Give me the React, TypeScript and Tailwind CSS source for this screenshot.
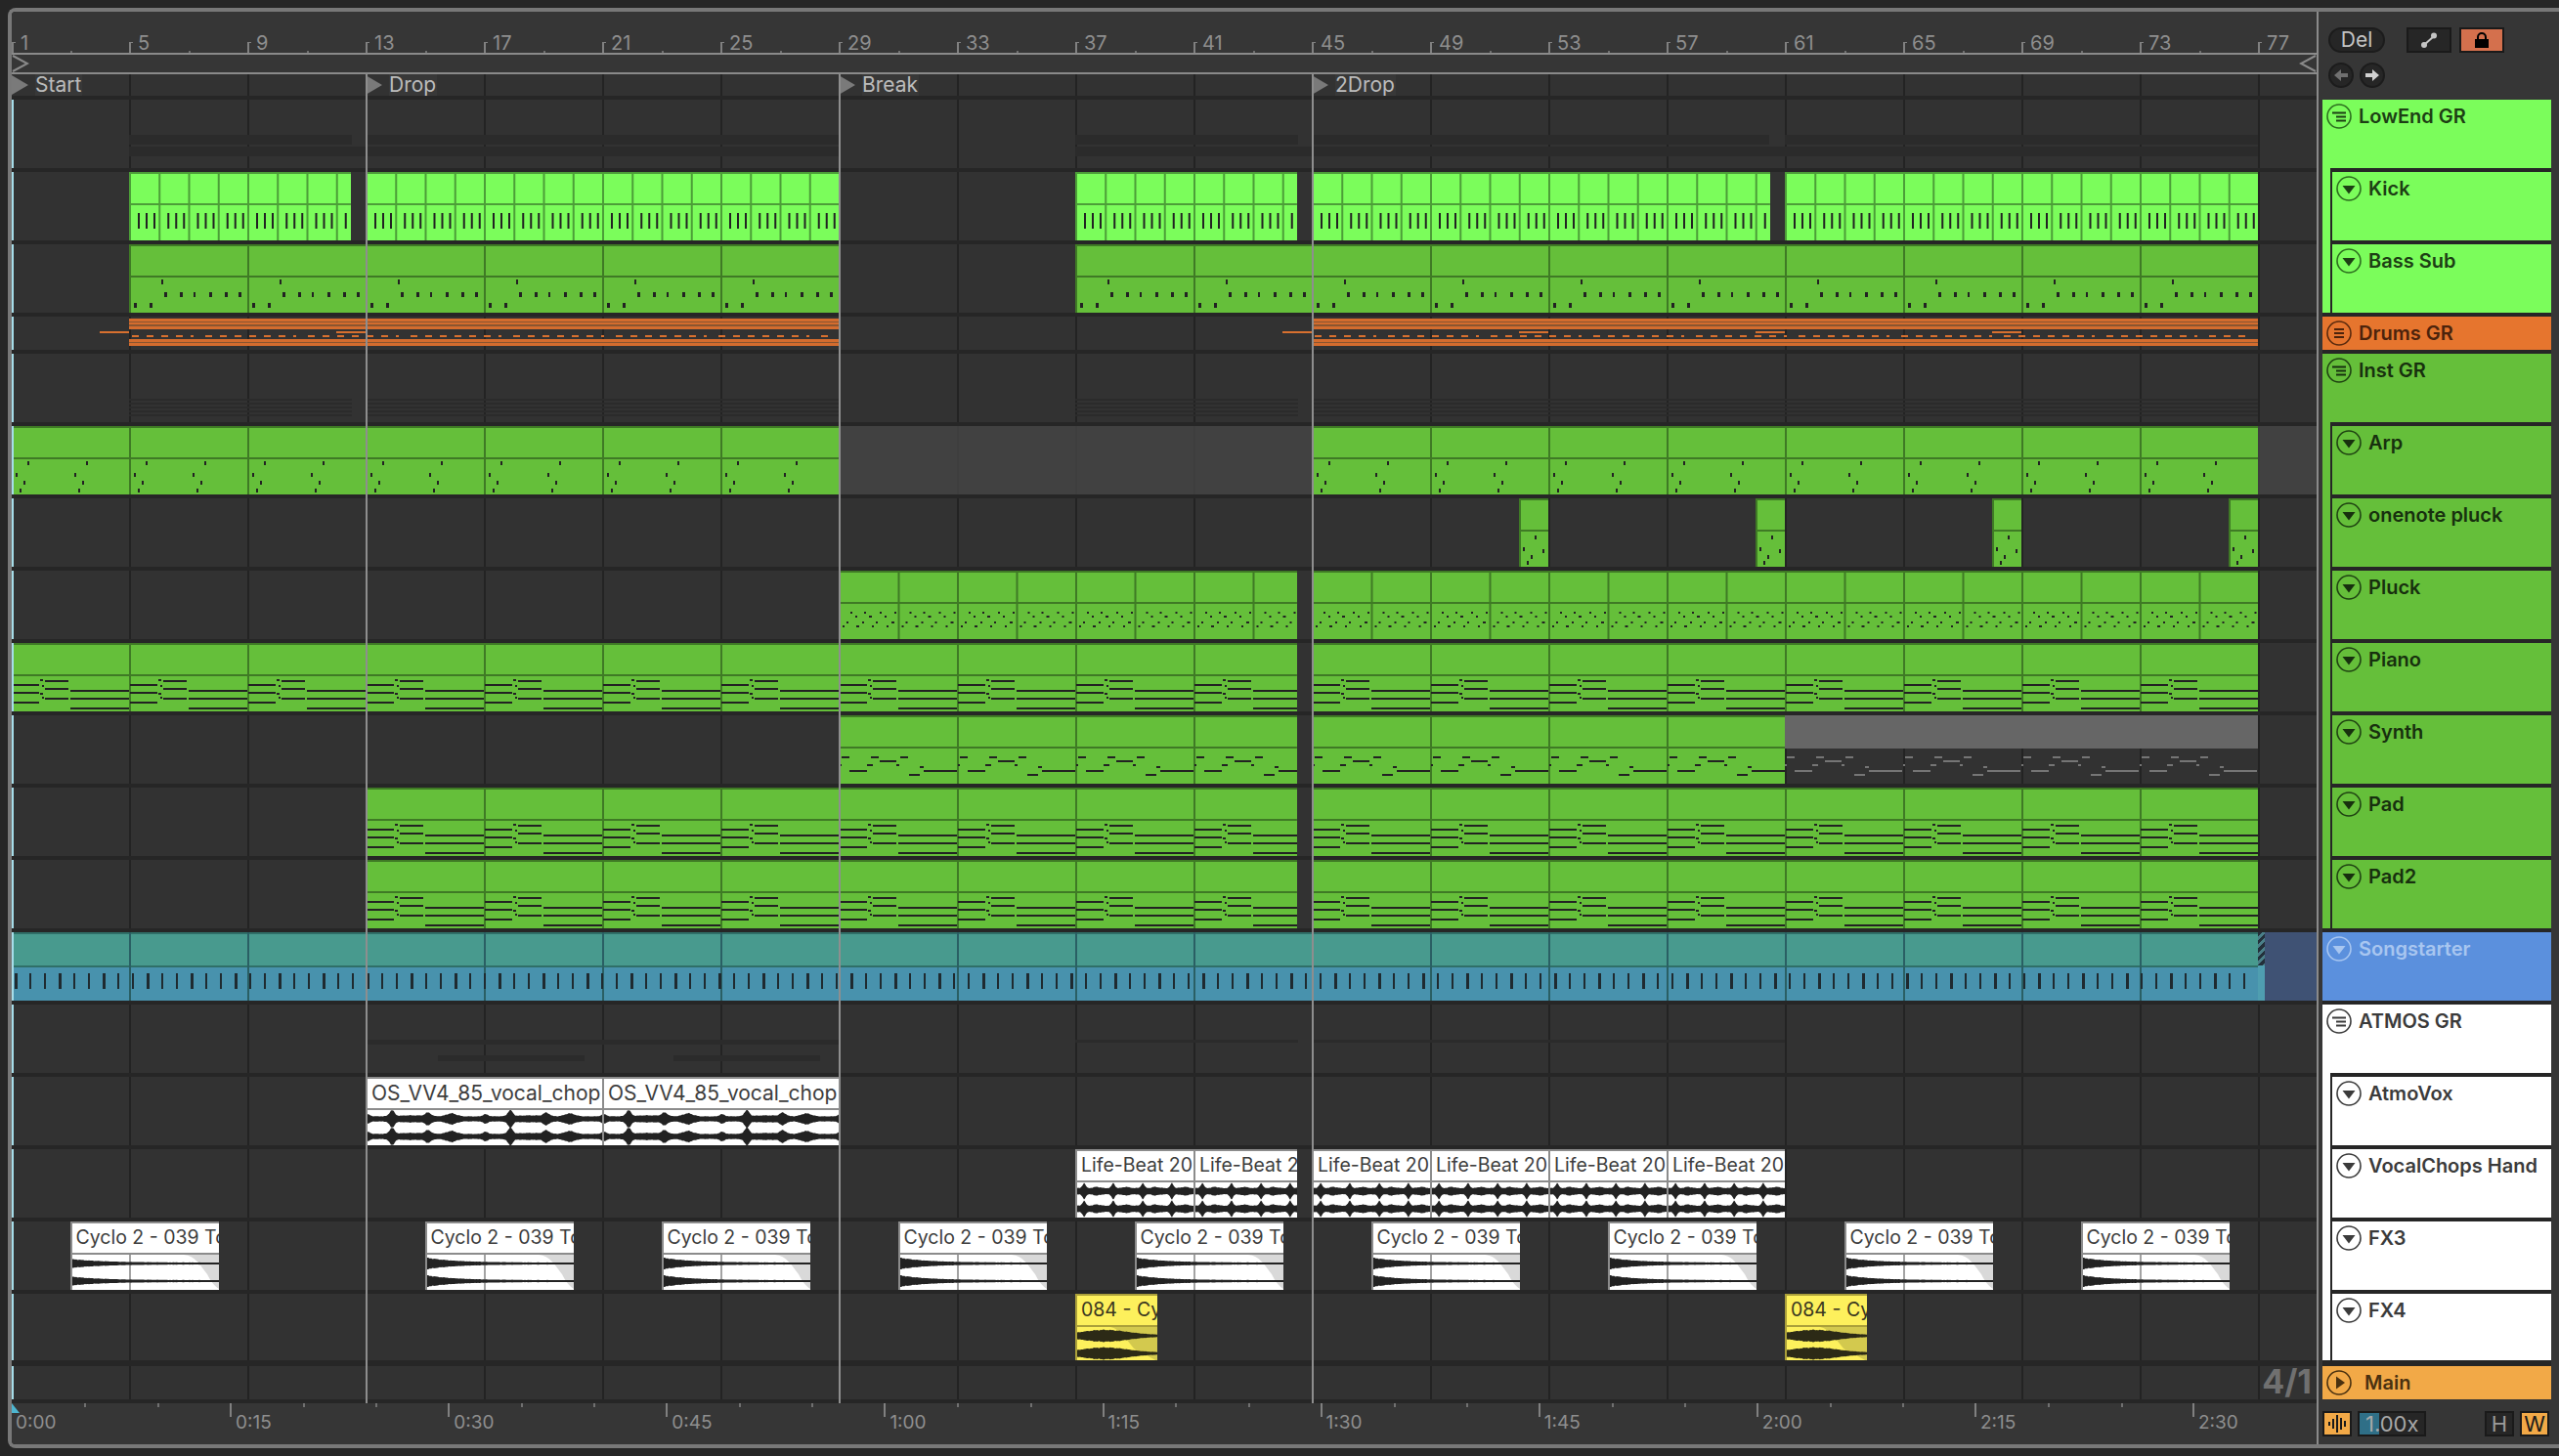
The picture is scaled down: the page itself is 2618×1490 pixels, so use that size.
import React from 'react';

const BAR = 30.25;
const barX = (bar: number) => (bar <= 1 ? 0 : (bar - 1) * BAR - 1);
const gridBars = Array.from({ length: 19 }, (_, i) => 5 + i * 4);

type Note = [number, number, number, number];

const bassNotes: Note[] = [
  [32, 36, 2, 5], [35, 49, 3, 5], [51, 49, 3, 5], [65, 49, 2, 5], [81, 49, 3, 5], [97, 49, 3, 5], [111, 49, 3, 5], [4, 60, 3, 5], [20, 60, 3, 5],
];
const arpNotes: Note[] = [
  [16, 36, 2, 4], [76, 36, 2, 4], [4, 48, 2, 4], [64, 48, 2, 4], [12, 56, 2, 4], [72, 56, 2, 4], [8, 64, 2, 4], [68, 64, 2, 4],
];
const padNotes: Note[] = [
  [34, 38, 24, 2], [0, 42, 28, 2], [34, 46, 24, 2], [60, 48, 60, 2], [0, 50, 28, 2], [34, 56, 24, 2], [60, 56, 60, 2], [0, 60, 28, 2], [60, 66, 60, 2],
  [29, 37, 3, 2], [31, 43, 2, 2], [29, 51, 3, 2], [31, 55, 2, 2],
];
const synthNotes: Note[] = [
  [2, 42, 8, 2], [32, 42, 8, 2], [62, 42, 8, 2], [41, 46, 17, 2], [0, 50, 2, 2], [28, 50, 6, 2], [58, 50, 3, 2], [82, 52, 4, 2], [10, 56, 18, 2], [86, 56, 34, 2], [71, 60, 11, 2],
];
const pluckDots: Note[] = [
  [11, 42, 2, 2], [25, 42, 2, 2], [41, 42, 2, 2], [56, 42, 2, 2], [16, 46, 2, 2], [30, 46, 3, 2], [46, 46, 2, 2],
  [7, 52, 2, 2], [23, 52, 2, 2], [37, 52, 2, 2], [53, 52, 3, 2], [3, 56, 2, 2], [17, 56, 3, 2], [33, 56, 2, 2], [48, 56, 2, 2],
];
const kickNotes: Note[] = [[8, 42, 2, 16], [16, 42, 2, 16], [24, 42, 2, 16]];

const themes = {
  light: { bg: 'bg-[#7bfd5b]', border: 'border-[#4c9e38]', line: '#4c9e38', note: '#222222' },
  green: { bg: 'bg-[#65bf3a]', border: 'border-[#3f7a25]', line: '#3f7a25', note: '#222222' },
};

function MidiClip({ from, to, theme, every, notes, period }: { from: number; to: number; theme: 'light' | 'green'; every: number; notes: Note[]; period: number }) {
  const t = themes[theme];
  const left = barX(from);
  const width = barX(to) - left;
  const reps = Math.ceil(2400 / period);
  const lines: number[] = [];
  for (let b = from + every; barX(b) < left + width - 1; b += every) lines.push(barX(b) - left);
  const rects: Note[] = [];
  for (let k = 0; k < reps; k++) {
    for (const n of notes) {
      const x = k * period + n[0] - left;
      if (x + n[2] > 0 && x < width) rects.push([x, n[1], n[2], n[3]]);
    }
  }
  return (
    <div className={`absolute inset-y-0 ${t.bg} border-l-2 border-t-2 ${t.border}`} style={{ left, width }}>
      <svg className="absolute left-[-2px] top-[-2px]" width={width} height={70}>
        <rect x={0} y={32} width={width} height={2} fill={t.line} />
        {lines.map(x => <rect key={x} x={x} y={0} width={2} height={70} fill={t.line} />)}
        {rects.map((r, i) => <rect key={i} x={r[0]} y={r[1]} width={r[2]} height={r[3]} fill={t.note} />)}
      </svg>
    </div>
  );
}

const noise = (x: number) => Math.sin(x * 1.9) * 0.5 + Math.sin(x * 0.73 + 1) * 0.5 + Math.sin(x * 3.7) * 0.3;

function wavePath(w: number, cy: number, amp: (x: number) => number) {
  const top: string[] = [];
  const bottom: string[] = [];
  for (let x = 0; x <= w; x += 1) {
    const base = amp(x);
    const a = base * (1 + 0.09 * noise(x));
    top.push(`${x},${(cy - a).toFixed(1)}`);
    bottom.unshift(`${x},${(cy + a).toFixed(1)}`);
  }
  return `M${top.join(' L')} L${bottom.join(' L')} Z`;
}

const bump = (x: number, c: number, width: number) => Math.exp(-((x - c) * (x - c)) / (2 * width * width));

const vocalAmp = (x: number) => {
  const p = x % 121;
  return 2.6 + 6 * bump(p, 25, 2.5) + 3.5 * bump(p, 62, 3) + 3 * bump(p, 86, 5) + 2.5 * bump(p, 121, 2.5) + 2 * bump(p, 0, 2.5) + 1 * bump(p, 45, 12);
};
const beatAmp = (x: number) => {
  const p = x % 30;
  return 3.2 + 5 * bump(p, 7, 1.6) + 1.2 * bump(p, 20, 3);
};
const cycloAmp = (x: number) => 1 + 4.8 * Math.exp(-x / 30);
const cycloSoftAmp = (x: number) => 1 + 3.4 * Math.exp(-x / 34);
const yellowAmp = (x: number) => 1 + 5 * Math.exp(-((x - 28) * (x - 28)) / 1100);

function AudioClip({ from, width, title, amp, fade, yellow, lines, wide }: { from: number; width: number; title: string; amp: (x: number) => number; fade?: string; yellow?: boolean; lines?: number[]; wide?: boolean }) {
  const shade = yellow ? '#2c2a16' : '#222222';
  return (
    <div
      className={`absolute inset-y-0 flex flex-col overflow-hidden border-l-2 border-t-2 ${yellow ? 'border-[#aba03a] bg-[#fdf05c] text-[#3a3720]' : 'border-[#8c8c8c] bg-white text-[#3d3d3d]'}`}
      style={{ left: from, width }}
    >
      <div className={`h-[32px] shrink-0 overflow-hidden whitespace-nowrap border-b-2 pl-[4px] leading-[29px] ${wide ? 'text-[21px]' : 'text-[19.5px]'} ${yellow ? 'border-[#aba03a]' : 'border-[#8c8c8c]'}`}>{title}</div>
      <svg className="shrink-0" width={width} height={36}>
        {fade && <path d={fade} fill={yellow ? '#d3c94e' : '#d9d9d9'} />}
        {lines?.map(x => <rect key={x} x={x} y={0} width={2} height={36} fill="#a3a3a3" />)}
        <path d={wavePath(width, 9, amp)} fill={shade} />
        <path d={wavePath(width, 27, amp)} fill={shade} />
      </svg>
    </div>
  );
}

function Grid() {
  return (
    <>
      {gridBars.map(b => (
        <div key={b} className="absolute inset-y-0 w-[2px] bg-[#232323]" style={{ left: barX(b) }} />
      ))}
    </>
  );
}

function Lane({ h, className, children }: { h: string; className?: string; children?: React.ReactNode }) {
  return (
    <div className={`relative shrink-0 overflow-hidden bg-[#323232] ${h} ${className ?? ''}`}>
      <Grid />
      {children}
      <div className="absolute inset-y-0 left-0 w-[2px] bg-[#a6dde9]" />
    </div>
  );
}

function Faint({ from, to, y, h }: { from: number; to: number; y: number; h: number }) {
  return <div className="absolute bg-[#2b2b2b]" style={{ left: from, width: to - from, top: y, height: h }} />;
}

const drumStripes: Array<[number, number]> = [[2, 3], [6, 2], [10, 3], [23, 3], [27, 3]];

function DrumClip({ from, to }: { from: number; to: number }) {
  const w = to - from;
  const dashes = Array.from({ length: Math.floor(w / 15) }, (_, i) => i * 15 + 3);
  return (
    <div className="absolute inset-y-0" style={{ left: from, width: w }}>
      <svg width={w} height={34}>
        <rect x={0} y={2} width={w} height={11} fill="#8a5530" />
        <rect x={0} y={23} width={w} height={7} fill="#8a5530" />
        {drumStripes.map(([y, h]) => <rect key={y} x={0} y={y} width={w} height={h} fill="#d46c2e" />)}
        {dashes.map(x => <rect key={x} x={x} y={19} width={x % 7 === 0 ? 3 : 7} height={2} fill="#d8702f" />)}
      </svg>
    </div>
  );
}

function Arrangement() {
  const cycloBars = [3, 15, 23, 31, 39, 47, 55, 63, 71];
  const fade = 'M114,0 C126,1 130,10 138,20 C142,28 146,33 152,36 L152,0 Z';
  return (
    <div className="flex w-[2360px] shrink-0 flex-col border-r-2 border-[#8a8a8a] bg-[#262626]">
      <Ruler />
      <div className="relative h-[22px] shrink-0 border-y-2 border-[#8a8a8a] bg-[#363636]">
        <svg className="absolute left-0 top-0" width={18} height={18}><path d="M1,1 L16,9 L1,17" fill="none" stroke="#8a8a8a" strokeWidth={2} /></svg>
        <svg className="absolute right-0 top-0" width={18} height={18}><path d="M17,1 L2,9 L17,17" fill="none" stroke="#8a8a8a" strokeWidth={2} /></svg>
      </div>
      <div className="relative mb-[4px] h-[22px] shrink-0 bg-[#323232]">
        <Grid />
        {[{ b: 1, t: 'Start' }, { b: 13, t: 'Drop' }, { b: 29, t: 'Break' }, { b: 45, t: '2Drop' }].map(l => (
          <div key={l.t} className="absolute inset-y-0 flex items-center" style={{ left: barX(l.b) }}>
            <svg width={24} height={22}><path d="M0,1 L17,11 L0,21 Z" fill="#7a7a7a" /></svg>
            <span className="bg-[#383838] pr-[1px] text-[21px] leading-[22px] text-[#bcbcbc]">{l.t}</span>
          </div>
        ))}
      </div>

      <div className="flex flex-col gap-1">
        <Lane h="h-[70px]">
          <Faint from={barX(5)} to={348} y={36} h={10} />
          <Faint from={barX(13)} to={barX(29)} y={36} h={10} />
          <Faint from={barX(37)} to={1316} y={36} h={10} />
          <Faint from={barX(45)} to={1798} y={36} h={10} />
          <Faint from={barX(61)} to={barX(77)} y={36} h={10} />
          <Faint from={barX(5)} to={barX(29)} y={48} h={10} />
          <Faint from={barX(37)} to={barX(77)} y={48} h={10} />
        </Lane>
        <Lane h="h-[70px]">
          <MidiClip from={5} to={12.5} theme="light" every={1} notes={kickNotes} period={BAR} />
          <MidiClip from={13} to={29} theme="light" every={1} notes={kickNotes} period={BAR} />
          <MidiClip from={37} to={44.5} theme="light" every={1} notes={kickNotes} period={BAR} />
          <MidiClip from={45} to={60.5} theme="light" every={1} notes={kickNotes} period={BAR} />
          <MidiClip from={61} to={77} theme="light" every={1} notes={kickNotes} period={BAR} />
        </Lane>
        <Lane h="h-[70px]">
          <MidiClip from={5} to={29} theme="green" every={4} notes={bassNotes} period={121} />
          <MidiClip from={37} to={77} theme="green" every={4} notes={bassNotes} period={121} />
        </Lane>
        <Lane h="h-[34px]">
          <DrumClip from={barX(5)} to={barX(29)} />
          <DrumClip from={barX(45)} to={barX(77)} />
          {[[90, 120], [332, 362], [1300, 1330], [1542, 1572], [1784, 1814], [2026, 2056]].map(([a, b]) => (
            <div key={a} className="absolute top-[15px] h-[2px] bg-[#d8702f]" style={{ left: a, width: b - a }} />
          ))}
        </Lane>
        <Lane h="h-[70px]">
          {[46, 50, 54, 58, 62].map(y => (
            <React.Fragment key={y}>
              <Faint from={barX(5)} to={348} y={y} h={2} />
              <Faint from={barX(13)} to={barX(29)} y={y} h={2} />
              <Faint from={barX(37)} to={1316} y={y} h={2} />
              <Faint from={barX(45)} to={barX(77)} y={y} h={2} />
            </React.Fragment>
          ))}
        </Lane>
        <Lane h="h-[70px]">
          <div className="absolute inset-y-0 bg-[#454545]/80" style={{ left: barX(29), width: barX(45) - barX(29) }} />
          <div className="absolute inset-y-0 right-0 bg-[#454545]/80" style={{ left: barX(77) }} />
          <MidiClip from={1} to={29} theme="green" every={4} notes={arpNotes} period={121} />
          <MidiClip from={45} to={77} theme="green" every={4} notes={arpNotes} period={121} />
        </Lane>
        <Lane h="h-[70px]">
          {[52, 60, 68, 76].map(b => (
            <MidiClip key={b} from={b} to={b + 1} theme="green" every={4} notes={[[16, 38, 2, 4], [4, 50, 2, 4], [12, 58, 2, 4], [8, 64, 2, 4], [24, 52, 2, 4]].map(n => [n[0] + barX(b), n[1], n[2], n[3]] as Note)} period={2400} />
          ))}
        </Lane>
        <Lane h="h-[70px]">
          <MidiClip from={29} to={44.5} theme="green" every={2} notes={pluckDots} period={60.5} />
          <MidiClip from={45} to={77} theme="green" every={2} notes={pluckDots} period={60.5} />
        </Lane>
        <Lane h="h-[70px]">
          <MidiClip from={1} to={44.5} theme="green" every={4} notes={padNotes} period={121} />
          <MidiClip from={45} to={77} theme="green" every={4} notes={padNotes} period={121} />
        </Lane>
        <Lane h="h-[70px]">
          <MidiClip from={29} to={44.5} theme="green" every={4} notes={synthNotes} period={121} />
          <MidiClip from={45} to={61} theme="green" every={4} notes={synthNotes} period={121} />
          <div className="absolute inset-y-0 flex flex-col" style={{ left: barX(61), width: barX(77) - barX(61) }}>
            <div className="h-[34px] bg-[#666666]" />
            <svg width={barX(77) - barX(61)} height={36} className="shrink-0">
              {Array.from({ length: 4 }).flatMap((_, k) => synthNotes.map((n, i) => (
                <rect key={`${k}-${i}`} x={k * 121 + n[0]} y={n[1] - 34} width={n[2]} height={n[3]} fill="#757575" />
              )))}
            </svg>
          </div>
        </Lane>
        <Lane h="h-[70px]">
          <MidiClip from={13} to={44.5} theme="green" every={4} notes={padNotes} period={121} />
          <MidiClip from={45} to={77} theme="green" every={4} notes={padNotes} period={121} />
        </Lane>
        <Lane h="h-[70px]">
          <MidiClip from={13} to={44.5} theme="green" every={4} notes={padNotes} period={121} />
          <MidiClip from={45} to={77} theme="green" every={4} notes={padNotes} period={121} />
        </Lane>
        <Lane h="h-[70px]">
          <div className="absolute inset-y-0 right-0 bg-[#3f5274]" style={{ left: barX(77) + 7 }} />
          <div className="absolute inset-y-0 left-0 flex flex-col" style={{ width: barX(77) }}>
            <div className="h-[34px] border-t-2 border-[#2f6f68] bg-[#489a8e]" />
            <div className="h-[36px] border-t-2 border-[#2f6f68] bg-[#4892ad]" />
          </div>
          <div className="absolute inset-y-0 flex w-[7px] flex-col" style={{ left: barX(77) }}>
            <div className="h-[34px] bg-[repeating-linear-gradient(135deg,#23303a_0px,#23303a_3px,#4a7f88_3px,#4a7f88_6px)]" />
            <div className="h-[36px] bg-[#4f9eb0]" />
          </div>
          <svg className="absolute left-0 top-0" width={barX(77)} height={70}>
            {gridBars.slice(0, -1).map(b => <rect key={b} x={barX(b)} y={0} width={2} height={70} fill="#2a5f64" />)}
            {Array.from({ length: 153 }, (_, i) => <rect key={i} x={i * 15 + 3} y={42} width={i % 3 === 0 ? 3 : 2} height={16} fill="#1f2a30" />)}
          </svg>
        </Lane>
        <Lane h="h-[70px]">
          <Faint from={barX(13)} to={barX(29)} y={36} h={5} />
          <Faint from={436} to={586} y={52} h={6} />
          <Faint from={677} to={827} y={52} h={6} />
          <Faint from={barX(37)} to={1316} y={36} h={3} />
          <Faint from={barX(45)} to={barX(61)} y={36} h={3} />
        </Lane>
        <Lane h="h-[70px]">
          <AudioClip from={barX(13)} width={242} title="OS_VV4_85_vocal_chop" amp={vocalAmp} wide />
          <AudioClip from={barX(21)} width={242} title="OS_VV4_85_vocal_chop" amp={vocalAmp} wide />
        </Lane>
        <Lane h="h-[70px]">
          <AudioClip from={barX(37)} width={121} title="Life-Beat 20" amp={beatAmp} />
          <AudioClip from={barX(41)} width={106} title="Life-Beat 20" amp={beatAmp} />
          {[45, 49, 53, 57].map(b => <AudioClip key={b} from={barX(b)} width={121} title="Life-Beat 20" amp={beatAmp} />)}
        </Lane>
        <Lane h="h-[70px]">
          {cycloBars.map((b, i) => (
            <AudioClip key={b} from={barX(b)} width={152} title="Cyclo 2 - 039 To" amp={i === 0 ? cycloSoftAmp : cycloAmp} fade={fade} lines={[58]} />
          ))}
        </Lane>
        <Lane h="h-[68px]">
          <AudioClip from={barX(37)} width={84} title="084 - Cy" amp={yellowAmp} yellow fade="M34,0 C44,2 50,12 58,22 L84,36 L84,0 Z" />
          <AudioClip from={barX(61)} width={84} title="084 - Cy" amp={yellowAmp} yellow fade="M34,0 C44,2 50,12 58,22 L84,36 L84,0 Z" />
        </Lane>
        <Lane h="mt-[2px] h-[34px]">
          <div className="absolute right-[5px] top-[-2px] text-[34px] font-bold leading-[36px] text-[#707070]">4/1</div>
        </Lane>
      </div>
      <TimeRuler />
    </div>
  );
}

function Ruler() {
  const ticks = Array.from({ length: 39 }, (_, i) => i * 2 + 1);
  return (
    <div className="relative h-[42px] shrink-0 bg-[#363636]">
      {ticks.map(b => (
        (b - 1) % 4 === 0 ? (
          <div key={b} className="absolute bottom-0 flex items-end" style={{ left: barX(b) }}>
            <div className="h-[11px] w-[2px] bg-[#808080]" />
            <div className="mb-[10px] h-[1px] w-[2px] bg-[#808080]" />
            <span className="mb-[-2px] ml-[5px] text-[20px] leading-[24px] text-[#8e8e8e]">{b}</span>
          </div>
        ) : (
          <div key={b} className="absolute bottom-0 h-[2px] w-[2px] bg-[#707070]" style={{ left: barX(b) }} />
        )
      ))}
    </div>
  );
}

function TimeRuler() {
  const labels = ['0:00', '0:15', '0:30', '0:45', '1:00', '1:15', '1:30', '1:45', '2:00', '2:15', '2:30'];
  return (
    <div className="relative mt-[4px] h-[42px] shrink-0 bg-[#363636]">
      <svg className="absolute left-0 top-0" width={8} height={10}><path d="M0,0 L8,10 L0,10 Z" fill="#4db6d0" /></svg>
      {Array.from({ length: 31 }, (_, i) => i).map(i => i % 3 !== 0 && (
        <div key={i} className="absolute top-0 h-[4px] w-[2px] bg-[#707070]" style={{ left: i * 74.4 }} />
      ))}
      {labels.map((l, i) => (
        <div key={l} className="absolute top-0 flex" style={{ left: i * 223.1 }}>
          {i > 0 && <div className="h-[14px] w-[2px] bg-[#808080]" />}
          <span className="ml-[4px] mt-[8px] text-[19px] leading-[24px] text-[#8e8e8e]">{l}</span>
        </div>
      ))}
    </div>
  );
}

function TrackIcon({ kind, stroke, fill }: { kind: 'group' | 'groupEven' | 'track' | 'play'; stroke: string; fill: string }) {
  return (
    <svg className="shrink-0" width={26} height={26} viewBox="0 0 26 26">
      <circle cx={13} cy={13} r={12} fill="none" stroke={stroke} strokeWidth={1.6} />
      {kind === 'track' && <path d="M6.5,10 L19.5,10 L13,18.5 Z" fill={fill} />}
      {kind === 'play' && <path d="M10,6.5 L19,13 L10,19.5 Z" fill={fill} />}
      {kind === 'group' && <path d="M6,8.5 H20 V10.5 H6 Z M10,12.5 H20 V14.5 H10 Z M10,16.5 H20 V18.5 H10 Z" fill={fill} />}
      {kind === 'groupEven' && <path d="M8,8 H18 V10 H8 Z M8,12 H18 V14 H8 Z M8,16 H18 V18 H8 Z" fill={fill} />}
    </svg>
  );
}

type Tone = { bg: string; text: string; stroke: string; fill: string };
const tones: Record<string, Tone> = {
  light: { bg: 'bg-[#7bfd5b]', text: 'text-[#1d3f14]', stroke: '#2c6e1e', fill: '#1d3f14' },
  orange: { bg: 'bg-[#e6752e]', text: 'text-[#4c230c]', stroke: '#5a2a0e', fill: '#4c230c' },
  green: { bg: 'bg-[#65bf3a]', text: 'text-[#17300e]', stroke: '#1f4312', fill: '#17300e' },
  blue: { bg: 'bg-[#5b90dd]', text: 'text-[#a8c6f0]', stroke: '#a8c6f0', fill: '#a8c6f0' },
  white: { bg: 'bg-white', text: 'text-[#3b3b3b]', stroke: '#3b3b3b', fill: '#3b3b3b' },
  main: { bg: 'bg-[#f2a947]', text: 'text-[#4a3110]', stroke: '#4a3110', fill: '#4a3110' },
};

function Header({ name, tone, kind, h, gap }: { name: string; tone: Tone; kind: 'group' | 'groupEven' | 'track' | 'play'; h: string; gap?: string }) {
  return (
    <div className={`flex items-start pl-[4px] pt-[4px] ${h} ${tone.text}`}>
      <TrackIcon kind={kind} stroke={tone.stroke} fill={tone.fill} />
      <span className={`${gap ?? 'ml-[7px]'} text-[20px] font-semibold leading-[26px]`}>{name}</span>
    </div>
  );
}

function Group({ name, tone, children, last }: { name: string; tone: Tone; children: string[]; last?: boolean }) {
  return (
    <div className={tone.bg}>
      <Header name={name} tone={tone} kind="group" h="h-[70px]" />
      <div className="pl-[8px]">
        {children.map((c, i) => (
          <div key={c} className="border-l-2 border-t-4 border-[#262626]">
            <Header name={c} tone={tone} kind="track" h={last && i === children.length - 1 ? 'h-[68px]' : 'h-[70px]'} />
          </div>
        ))}
      </div>
    </div>
  );
}

function SmallBox({ children, className }: { children: React.ReactNode; className: string }) {
  return <div className={`flex h-[26px] items-center justify-center border-2 border-[#1a1a1a] ${className}`}>{children}</div>;
}

function Panel() {
  return (
    <div className="flex w-[242px] shrink-0 flex-col pl-1 pr-1">
      <div className="h-[90px] shrink-0 pl-[6px] pt-[16px]">
        <div className="flex items-center">
          <div className="flex h-[26px] w-[58px] items-center justify-center rounded-full border-2 border-[#1c1c1c] bg-[#262626] text-[21px] text-[#c4c4c4]">Del</div>
          <SmallBox className="ml-[22px] w-[46px] bg-[#262626]">
            <svg width={18} height={18}><path d="M4,14 L14,5" stroke="#c4c4c4" strokeWidth={2} /><circle cx={4} cy={14} r={3} fill="#c4c4c4" /><circle cx={14} cy={4.5} r={3} fill="#c4c4c4" /></svg>
          </SmallBox>
          <SmallBox className="ml-[8px] w-[46px] bg-[#d4704d]">
            <svg width={18} height={18}><path d="M5,8 V6 A4,4 0 0 1 13,6 V8" fill="none" stroke="#000" strokeWidth={2} /><rect x={2} y={8} width={14} height={9} fill="#000" /></svg>
          </SmallBox>
        </div>
        <div className="mt-[10px] flex gap-[6px]">
          <div className="flex h-[26px] w-[26px] items-center justify-center rounded-full border-2 border-[#1c1c1c] bg-[#262626]">
            <svg width={16} height={14}><path d="M1,7 L8,1 V5 H15 V9 H8 V13 Z" fill="#707070" /></svg>
          </div>
          <div className="flex h-[26px] w-[26px] items-center justify-center rounded-full border-2 border-[#1c1c1c] bg-[#262626]">
            <svg width={16} height={14}><path d="M15,7 L8,1 V5 H1 V9 H8 V13 Z" fill="#d0d0d0" /></svg>
          </div>
        </div>
      </div>
      <div className="flex flex-col gap-1 bg-[#262626]">
        <Group name="LowEnd GR" tone={tones.light} children={['Kick', 'Bass Sub']} />
        <div className={tones.orange.bg}><Header name="Drums GR" tone={tones.orange} kind="groupEven" h="h-[34px]" /></div>
        <Group name="Inst GR" tone={tones.green} children={['Arp', 'onenote pluck', 'Pluck', 'Piano', 'Synth', 'Pad', 'Pad2']} />
        <div className={tones.blue.bg}><Header name="Songstarter" tone={tones.blue} kind="track" h="h-[70px]" /></div>
        <Group name="ATMOS GR" tone={tones.white} children={['AtmoVox', 'VocalChops Hand', 'FX3', 'FX4']} last />
        <div className={`mt-[2px] ${tones.main.bg}`}><Header name="Main" tone={tones.main} kind="play" h="h-[34px]" gap="ml-[13px]" /></div>
      </div>
      <div className="flex items-center pr-[2px] pt-[12px]">
        <SmallBox className="w-[30px] bg-[#f2a947]">
          <svg width={20} height={20}>
            {[[2, 8, 4], [6, 5, 10], [10, 1, 18], [14, 4, 12], [18, 7, 6]].map(([x, y, h]) => <rect key={x} x={x - 1} y={y} width={2} height={h} fill="#1a1a1a" />)}
          </svg>
        </SmallBox>
        <div className="relative ml-[6px] flex h-[26px] w-[70px] items-center border-2 border-[#1a1a1a] bg-[#262626] text-[22px] text-[#a8a8a8]">
          <div className="absolute inset-y-0 left-0 w-[20px] bg-[#2f6f87]" />
          <span className="relative pl-[6px]">1.00x</span>
        </div>
        <SmallBox className="ml-auto w-[30px] bg-[#262626] text-[22px] text-[#9a9a9a]">H</SmallBox>
        <SmallBox className="ml-[6px] w-[30px] bg-[#f2a947] text-[22px] text-[#1a1a1a]">W</SmallBox>
      </div>
    </div>
  );
}

export default function App() {
  return (
    <div className="h-[1490px] w-[2618px] overflow-hidden bg-[#262626] pl-2 pt-2 [font-family:Inter,sans-serif]">
      <div className="relative flex h-[1474px] w-[2610px] overflow-hidden rounded-l-[8px] border-y-4 border-l-4 border-[#787878] bg-[#363636]">
        <Arrangement />
        <Panel />
        {[13, 29, 45].map(b => (
          <div key={b} className="absolute bottom-[42px] top-[64px] w-[2px] bg-[#8e8e8e]" style={{ left: barX(b) }} />
        ))}
      </div>
    </div>
  );
}
